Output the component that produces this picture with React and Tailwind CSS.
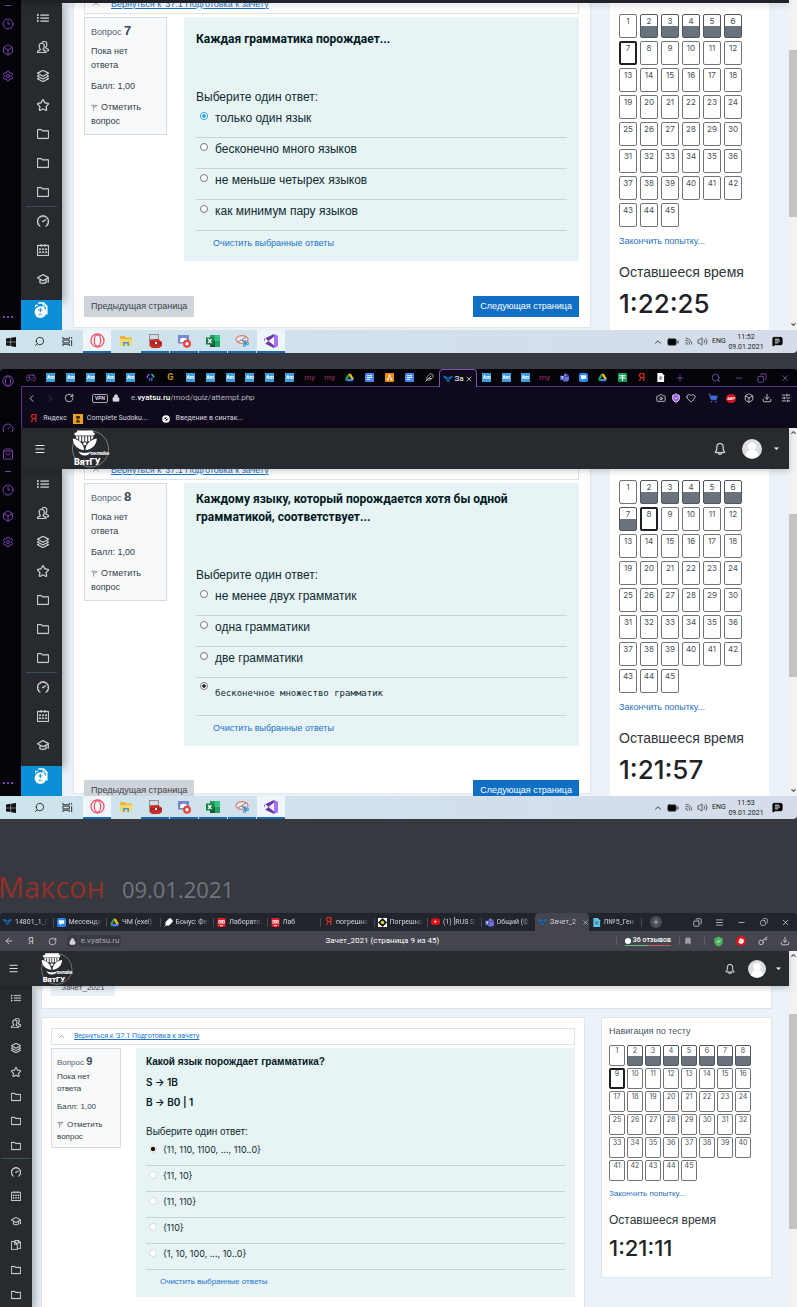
import React from "react";
import {
  Clock3, Box, Settings, Gauge, ShoppingBag, ChevronLeft, ChevronRight, RotateCw, Lock, Camera,
  Heart, ShoppingCart, Download, Search, Minus, Copy, X, Plus, Menu, Feather, Bookmark,
  ArrowLeft, ChevronUp, Wifi, Volume2, Key, Gamepad2, ShieldCheck, Hand, BatteryFull, MessageSquareText,
  SlidersHorizontal,
} from "lucide-react";
import {
  SlList, SlPeople, SlLayers, SlStar, SlFolder, SlSpeedometer, SlCalender, SlGraduation, SlDocs, SlBell,
} from "react-icons/sl";

/* ---------- small drawings ---------- */

function OperaIcon({ className }) {
  return (
    <svg viewBox="0 0 16 16" className={className} fill="none" stroke="currentColor" strokeWidth="1.3">
      <circle cx="8" cy="8" r="7" />
      <ellipse cx="8" cy="8" rx="3.4" ry="6" />
    </svg>
  );
}

function DriveIcon() {
  return (
    <svg viewBox="0 0 12 12" className="size-[9px]">
      <path d="M4.2 1h3.6L12 8H8.2z" fill="#fbbc04" />
      <path d="M4.2 1 0 8l1.9 3L6 4z" fill="#1ea362" />
      <path d="M1.9 11 3.8 8H12l-1.9 3z" fill="#4285f4" />
    </svg>
  );
}

function LinesIcon({ color }) {
  return (
    <svg viewBox="0 0 10 10" className="size-[9px]">
      <rect width="10" height="10" rx="1" fill={color} />
      <path d="M2 3h6M2 5h6M2 7h4" stroke="#fff" />
    </svg>
  );
}

function SheetIcon() {
  return (
    <svg viewBox="0 0 10 10" className="size-[9px]">
      <rect width="10" height="10" rx="1" fill="#0f9d58" />
      <path d="M1.500 3h7M1.500 5.500h7M5 2v6.500" stroke="#fff" strokeWidth="1.2" />
    </svg>
  );
}

function OrgIcon() {
  return (
    <svg viewBox="0 0 10 10" className="size-[9px]">
      <rect width="10" height="10" rx="1" fill="#f08705" />
      <path d="M5 3 3 7M5 3l2 4" stroke="#fff" />
      <path d="M4 1.6h2v2H4zM2 6h2v2H2zM6 6h2v2H6z" fill="#fff" />
    </svg>
  );
}

function ChatIcon() {
  return (
    <svg viewBox="0 0 10 10" className="size-[9px]">
      <rect width="10" height="10" rx="2" fill="#2787f5" />
      <path d="M2 2.5h6v4H5L3.4 8V6.5H2z" fill="#fff" />
    </svg>
  );
}

function TeamsIcon() {
  return (
    <svg viewBox="0 0 10 10" className="size-[9px]">
      <circle cx="6" cy="2.2" r="1.6" fill="#7b83eb" />
      <circle cx="8.6" cy="2.8" r="1.1" fill="#5059c9" />
      <path d="M3 4h7v3.2a2.4 2.4 0 0 1-2.4 2.3H5A2 2 0 0 1 3 7.5z" fill="#6a72dd" />
      <rect y="3" width="5.2" height="5" fill="#4b53bc" />
      <path d="M1.2 4.3H4M2.6 4.3V7" stroke="#fff" strokeWidth=".9" />
    </svg>
  );
}

function UniIcon() {
  return (
    <svg viewBox="0 0 12 10" className="h-2 w-[10px]">
      <path d="M0 1c2 0 4 .6 5 2h2c1-1.400 3-2 5-2-.5 2.500-2 4-4 4.200L7.500 8.500h-3L4 5.200C2 5 .5 3.500 0 1z" fill="#1669b5" />
      <circle cx="6" cy="5" r="1" fill="#0b1c33" />
    </svg>
  );
}

function PdfIcon() {
  return (
    <svg viewBox="0 0 10 10" className="size-[9px]">
      <rect x=".5" width="9" height="10" rx="1.500" fill="#e0202c" />
      <path d="M1.500 2.500h7v3.500h-7z" fill="#fff" />
      <path d="M2.500 3.500v2M4.500 3.500v2M7 3.500v2" stroke="#e0202c" strokeWidth=".9" />
      <path d="M3.500 8.500h3" stroke="#fff" />
    </svg>
  );
}

function DocPage({ color }) {
  return (
    <svg viewBox="0 0 10 10" className="size-[9px]">
      <path d="M1.500 0h5l2.500 2.500V10h-7.500z" fill={color} />
      <path d="M3.500 4.500h3.500M3.500 6.500h3.500" stroke="#555" />
    </svg>
  );
}

function Knot() {
  return (
    <svg viewBox="0 0 10 10" className="size-2">
      <circle cx="5" cy="5" r="4.800" fill="#fff" />
      <path d="M2.500 5.500 5.500 2.500M4.500 7.500l3-3M3.500 3.500l3 3" stroke="#111" strokeWidth="1.200" />
    </svg>
  );
}

function FlagIcon() {
  return (
    <svg viewBox="0 0 8 8" className="mr-[3px] inline size-[7px]" fill="none" stroke="#77828c" strokeWidth=".9">
      <path d="M.5 1.500h6.500L5.200 3.400H2.600M1.400 1.500 3 4v3.500" />
    </svg>
  );
}

function Ya() {
  return <span className="text-[11px] leading-3 text-[#e8341c]">Я</span>;
}

function Am() {
  return (
    <span className="flex size-[9px] items-center justify-center bg-[#3b9ede] text-[5px] font-bold leading-none text-white">Am</span>
  );
}

function My() {
  return <span className="text-[8px] leading-none text-[#a32c68]">my</span>;
}

function Swirl() {
  return (
    <svg viewBox="0 0 10 10" className="size-[9px]" fill="none" strokeWidth="1.600">
      <path d="M1.500 6a3.500 3.500 0 0 1 3-4.500" stroke="#7a4ee0" />
      <path d="M6 1.500A3.500 3.500 0 0 1 8.500 5" stroke="#35c0a0" />
      <path d="M4 5.500v3M6.500 5v4" stroke="#3b6df0" />
    </svg>
  );
}

function GIcon() {
  return <span className="text-[9px] font-bold leading-none text-[#c79a1c]">G</span>;
}

function Logo({ className }) {
  return (
    <svg viewBox="0 0 40 40" className={className}>
      <circle cx="18.500" cy="20" r="18" fill="none" stroke="#8d9196" strokeWidth=".8" />
      <path d="M2 4.500 5 3V1.500h16V3l2 1.500-1 2H3z" fill="#fff" />
      <path d="M4 7.200h2.200v3.600L4 9zM7.200 7.200h2v5h-2zM10.200 7.200h2v5.500h-2zM13.200 7.200h2v5.500h-2zM16.200 7.200h2v5h-2zM19.200 7.200h2V9l-2 1.800z" fill="#fff" />
      <path d="M.8 9.500c5.500.8 10.700 4.500 11.400 11.500C5.500 20.500 1 16 .8 9.500zM24.800 9.500c-5.500.8-10.700 4.500-11.400 11.500 6.700-.5 11.200-5 11.400-11.500z" fill="#fff" />
      <circle cx="12.800" cy="14.800" r="2" fill="#fff" stroke="#272b30" strokeWidth=".8" />
      <path d="M6.500 22.300c3 2.200 9.600 2.200 12.600 0-1 2.800-3.300 4.200-6.300 4.200s-5.300-1.400-6.300-4.200z" fill="#fff" />
      <text x="18.500" y="26" fontSize="5.500" fontWeight="700" fill="#fff" fontFamily="Roboto, sans-serif">онлайн</text>
      <text x="2" y="35.500" fontSize="9" fontWeight="900" fill="#fff" fontFamily="Roboto, sans-serif">ВятГУ</text>
    </svg>
  );
}

function Avatar({ className }) {
  return (
    <svg viewBox="0 0 20 20" className={className}>
      <circle cx="10" cy="10" r="10" fill="#dcdee0" />
      <circle cx="10" cy="7.500" r="4.200" fill="#fff" />
      <path d="M3.500 17a6.500 6.500 0 0 1 13 0A10 10 0 0 1 3.500 17z" fill="#fff" />
    </svg>
  );
}

/* ---------- desktop pieces ---------- */

function RailIcon({ icon: Icon }) {
  return <Icon className="size-3" strokeWidth={2} />;
}

function Rail({ full }) {
  return (
    <aside className="flex w-[21px] shrink-0 flex-col items-center bg-[#05030a] pr-[5px] text-[#7446ac]">
      {full && (
        <div className="flex flex-col items-center pt-1.5">
          <OperaIcon className="size-3" />
          <div className="flex flex-col gap-3.5 pt-[35px]">
            <RailIcon icon={Gauge} />
            <RailIcon icon={ShoppingBag} />
          </div>
        </div>
      )}
      <div className={full ? "mt-[11px] h-px w-1.5 bg-current" : "mt-[5px] h-px w-1.5 bg-current"} />
      <div className="flex flex-col gap-3.5 pt-3">
        <RailIcon icon={Clock3} />
        <RailIcon icon={Box} />
        <RailIcon icon={Settings} />
      </div>
      <div className="mb-3 mt-auto flex gap-0.5">
        <i className="size-0.5 bg-current" />
        <i className="size-0.5 bg-current" />
        <i className="size-0.5 bg-current" />
      </div>
    </aside>
  );
}

function TaskApp({ children, active, running = true }) {
  return (
    <div className={`flex h-full w-7 items-center justify-center border-b-2 ${active ? "bg-[#eef6fa]" : ""} ${running ? "border-[#1a69b5]" : "border-transparent"}`}>
      {children}
    </div>
  );
}

function Taskbar({ time }) {
  return (
    <footer className="flex h-[23px] shrink-0 items-center rounded-br bg-linear-to-r from-[#cde4ed] to-[#d5dcea] text-[#1b1b1b]">
      <div className="flex h-full items-center">
        <div className="flex w-[83px] items-center justify-between pl-1.5 pr-2.5">
          <svg viewBox="0 0 10 10" className="size-[10px]"><path d="M0 1.400 4.600.8v3.900H0zM5.100.7 10 0v4.700H5.100zM0 5.200h4.600v3.900L0 8.500zM5.100 5.200H10V10l-4.900-.7z" fill="#111" /></svg>
          <Search className="size-[11px] -scale-x-100" strokeWidth={1.8} />
          <svg viewBox="0 0 12 12" className="size-[11px]" fill="none" stroke="#222"><path d="M1 1v2h7V1M1 11V9h7v2M1 4.500h7v3H1zM10.500 1v2M10.500 4.500V11" /></svg>
        </div>
        <div className="flex h-full gap-[1px]">
          <TaskApp active><OperaIcon className="size-[15px] text-[#ef4860]" /></TaskApp>
          <TaskApp running={false}>
            <svg viewBox="0 0 14 12" className="w-3.5"><path d="M1 1h5l1 1.500h6V11H1z" fill="#eab73c" /><path d="M1 4h12v7H1z" fill="#fbd768" /><path d="M4 11V7h6v4H8.500V8.500h-3V11z" fill="#3f9be0" /></svg>
          </TaskApp>
          <TaskApp>
            <svg viewBox="0 0 14 14" className="w-3.5"><path d="M1 0h10v7H1z" fill="#8b9098" /><path d="M2 1h8v4H2z" fill="#d7dadd" /><path d="M1.500 6 10 5l4 3v4l-3 2H4l-2.500-2z" fill="#c42b2b" /><path d="M2 9h11.500" stroke="#8d1c1c" /><path d="M7 8h2v2H7z" fill="#eee" /></svg>
          </TaskApp>
          <TaskApp>
            <svg viewBox="0 0 14 14" className="w-3.5"><path d="M1 1h11v10l-2-1.500H1z" fill="#7587cf" /><path d="M3.500 4.500c2-1 4-1 6 0l.5 3.500H3z" fill="#fff" /><circle cx="10" cy="9.800" r="4" fill="#e8433f" /><circle cx="10" cy="9.800" r="1.700" fill="#fff" /></svg>
          </TaskApp>
          <TaskApp>
            <svg viewBox="0 0 14 12" className="w-3.5"><path d="M4 0h10v12H4z" fill="#21a366" /><path d="M9 0h5v6H9z" fill="#33c481" /><path d="M4 6h5v6H4z" fill="#185c37" /><path d="M0 2.500h7.500v7H0z" fill="#107c41" /><path d="m2 4 3.500 4M5.500 4 2 8" stroke="#fff" strokeWidth="1.200" /></svg>
          </TaskApp>
          <TaskApp>
            <svg viewBox="0 0 14 12" className="w-3.5" fill="none"><ellipse cx="7" cy="4.500" rx="6" ry="3.800" stroke="#d8837f" strokeWidth="1.300" fill="#f4e6e6" /><path d="m3 7 8-5" stroke="#888" /><path d="m7 5 5 4M10 5v5" stroke="#2b8ac9" strokeWidth="1.200" /><circle cx="9.500" cy="10.500" r="1.200" stroke="#2b8ac9" /><circle cx="12.500" cy="8.500" r="1.200" stroke="#2b8ac9" /></svg>
          </TaskApp>
          <TaskApp active>
            <svg viewBox="0 0 14 14" className="w-3.5">
              <path d="M10 0 14 1.700v10.600L10 14z" fill="#a673ea" />
              <path d="M1.200 4.200 0 4.900v4.200l1.200.7L10 2.500V0zM1.200 9.800 0 9.100V8l1.200-3.800L10 11.500V14z" fill="#6b35a8" />
            </svg>
          </TaskApp>
        </div>
      </div>
      <div className="ml-auto flex items-center pr-3.5">
        <ChevronUp className="mr-1 size-[10px]" strokeWidth={2} />
        <BatteryFull className="mr-1 size-3 fill-black" strokeWidth={2} />
        <Wifi className="mr-1 size-[10px] rotate-45 text-[#555]" strokeWidth={2} />
        <Volume2 className="mr-1 size-[11px]" strokeWidth={1.5} />
        <span className="w-4 font-['Roboto',sans-serif] text-[7px]">ENG</span>
        <div className="w-9 text-center font-['Roboto',sans-serif] text-[7px] leading-[10px]">
          <div>{time}</div>
          <div>09.01.2021</div>
        </div>
        <MessageSquareText className="ml-2 size-[11px] fill-black text-black [&>path:not(:first-child)]:text-white" strokeWidth={2} />
      </div>
    </footer>
  );
}

function Scrollbar({ top, thumb, arrowTop = true, arrowBottom = true }) {
  return (
    <div className="flex w-2 shrink-0 flex-col items-center bg-[#f1f2f3]">
      <div className="flex h-2 items-center">
        {arrowTop && <ChevronUp className="size-[7px] text-[#555]" strokeWidth={4} />}
      </div>
      <div className={top} />
      <div className={`w-full bg-[#c1c3c5] ${thumb}`} />
      {arrowBottom && <ChevronUp className="mb-0.5 mt-auto size-[7px] rotate-180 text-[#555]" strokeWidth={4} />}
    </div>
  );
}

/* ---------- course site pieces ---------- */

const menu = [SlList, SlPeople, SlLayers, SlStar, SlFolder, SlFolder, SlFolder, SlSpeedometer, SlCalender, SlGraduation];

function SiteMenu() {
  return (
    <nav className="relative z-10 flex w-[41px] shrink-0 flex-col">
      <div className="flex flex-col bg-[#272b30] pb-[7px] text-[#e4e6e8] shadow-[3px_2px_8px_rgba(0,0,0,.3)]">
        {menu.map((Icon, i) => (
          <a href="#" key={i} aria-label="Раздел" className={`mx-[5px] flex h-[29px] items-center justify-center pl-0.5 ${i === 7 ? "border-t border-[#3d4d57]" : ""}`}>
            <Icon className="size-3 stroke-current [stroke-width:30]" />
          </a>
        ))}
      </div>
      <a href="#" aria-label="Документы" className="flex flex-1 items-start justify-center bg-[#0a8fd6] pb-[11px] pt-0.5 text-white">
        <svg viewBox="0 0 14 16" className="h-[17px]">
          <path d="M4 1h5l3 3v7H8" fill="none" stroke="#fff" strokeWidth="1.500" />
          <path d="M8.500 1v3.500H12M1.500 5V3H4" fill="none" stroke="#fff" />
          <circle cx="6" cy="9.500" r="5.500" fill="#fff" />
          <path d="M6 5.500v4M4 7.500h4M4.500 12.500 6 11l1.500 1.500" stroke="#0a8fd6" fill="none" strokeWidth=".9" />
        </svg>
      </a>
    </nav>
  );
}

const compactMenu = [...menu, SlDocs, SlFolder, SlFolder];

function CompactMenu() {
  return (
    <nav className="relative z-10 flex w-8 shrink-0 flex-col bg-[#272b30] text-[#e4e6e8] shadow-[3px_2px_8px_rgba(0,0,0,.3)]">
      {compactMenu.map((Icon, i) => (
        <a href="#" key={i} aria-label="Раздел" className={`mx-px flex flex-1 items-center justify-center ${i === 7 ? "border-t border-[#3d5557]" : ""}`}>
          <Icon className="size-[10px] stroke-current [stroke-width:30]" />
        </a>
      ))}
    </nav>
  );
}

function SiteHeader({ compact }) {
  return (
    <header className={`relative z-20 flex shrink-0 items-center bg-[#272b30] text-[#e8e9ea] shadow-[0_2px_6px_rgba(0,0,0,.2)] ${compact ? "h-[35px] pl-2 pr-2" : "h-[41px] pl-[13px] pr-2.5"}`}>
      <button aria-label="Меню">
        <Menu className={compact ? "size-[11px]" : "size-3"} strokeWidth={2} />
      </button>
      <Logo className={compact ? "ml-[22px] size-[34px]" : "ml-[26px] size-10"} />
      <div className="ml-auto flex items-center">
        <button aria-label="Уведомления"><SlBell className={compact ? "size-[10px] stroke-current [stroke-width:30]" : "size-3 stroke-current [stroke-width:30]"} /></button>
        <Avatar className={compact ? "ml-[13px] size-[18px]" : "ml-4 size-5"} />
        <svg viewBox="0 0 6 4" className={compact ? "ml-2.5 w-[5px]" : "ml-3 w-[5px]"}><path d="M0 .5h6L3 3.500z" fill="#fff" /></svg>
      </div>
    </header>
  );
}

function BackLink({ compact }) {
  return (
    <div className={`flex items-center border border-[#dee2e6] bg-white ${compact ? "h-[17px] gap-2 pl-[5px]" : "-mt-[9px] h-5 gap-2.5 pl-1.5"}`}>
      <ChevronUp className={compact ? "size-[9px] text-[#5c6f80]" : "size-[10px] text-[#5c6f80]"} strokeWidth={1.6} />
      <a href="#" className={`text-[#1b74c9] underline ${compact ? "font-['Roboto',sans-serif] text-[7px]" : "text-[9px]"}`}>
        Вернуться к '37.1 Подготовка к зачету
      </a>
    </div>
  );
}

function QuestionInfo({ number, compact }) {
  return (
    <div className={`shrink-0 self-start border border-[#d5dbe1] bg-[#f8f9fb] text-[#343f4a] ${compact ? "w-[70px] pb-1 pl-[5px] pt-1 text-[8px] leading-3" : "w-[83px] pb-[6px] pl-1.5 pt-1 text-[9px] leading-[14px]"}`}>
      <div className="text-[#56636f]">
        Вопрос <b className={compact ? "text-[11px] leading-4 text-[#3c4a57]" : "text-[13px] leading-[18px] text-[#3c4a57]"}>{number}</b>
      </div>
      <div className={compact ? "mt-0.5" : "mt-1"}>Пока нет<br />ответа</div>
      <div className={compact ? "mt-1.5" : "mt-[7px]"}>Балл: 1,00</div>
      <button className={`block text-left ${compact ? "mt-1.5" : "mt-[7px]"}`}>
        <FlagIcon />
        Отметить<br />вопрос
      </button>
    </div>
  );
}

function Options({ name, options, checked, compact, tone, mono }) {
  return (
    <fieldset className="min-w-0">
      <legend className={compact ? "text-[10px] leading-4" : "text-[12px] leading-[19px]"}>Выберите один ответ:</legend>
      {options.map((text, i) => (
        <label
          key={text}
          className={`flex items-start border-b border-[#c7d3d6] ${compact ? "gap-1 pb-[7px] pl-[3px] pt-px" : "gap-[7px] pl-1"} ${compact ? "min-h-[26px]" : i === mono ? "pb-3 pt-1.5" : "pb-[9px] pt-px"}`}
        >
          <input
            type="radio"
            name={name}
            defaultChecked={i === checked}
            className={`shrink-0 appearance-none rounded-full border bg-white ${compact ? "mt-1 size-2 border-[#d5dde0]" : `size-2 ${i === mono ? "-mt-0.5" : "mt-1"} border-[#777]`} ${tone}`}
          />
          <span className={compact ? "ml-0.5 font-['Inter',sans-serif] text-[9px] leading-[17px]" : i === mono ? "font-['DejaVu_Sans_Mono',monospace] text-[9px] leading-[19px]" : "text-[12px] leading-5"}>
            {text}
          </span>
        </label>
      ))}
      <a href="#" className={`block text-[#1b74c9] ${compact ? "ml-3.5 mt-1.5 text-[8px] leading-3" : "ml-[17px] mt-[5px] text-[9px] leading-[14px]"}`}>
        Очистить выбранные ответы
      </a>
    </fieldset>
  );
}

function QuizNav({ current, answered, compact }) {
  return (
    <div className={compact ? "grid grid-cols-[repeat(8,16px)] gap-0.5" : "grid grid-cols-[repeat(6,18px)] gap-[3px]"}>
      {Array.from({ length: 45 }, (_, k) => k + 1).map((n) => (
        <a
          href="#"
          key={n}
          className={`rounded-[2px] text-center font-['Inter',sans-serif] ${compact ? "h-[21px] text-[7px] leading-[10px]" : "h-6 text-[8px] leading-3"} ${
            n === current
              ? "border-2 border-[#1d2125] text-[#495057]"
              : answered.includes(n)
                ? "border border-[#4f565d] bg-linear-to-b from-white from-50% to-[#6a737b] to-50% text-[#495057]"
                : "border border-[#6f757b] text-[#495057]"
          }`}
        >
          <span className={n === current ? "-mt-px block" : "block"}>{n}</span>
        </a>
      ))}
    </div>
  );
}

function Timer({ value, compact }) {
  return (
    <div>
      <a href="#" className={`block text-[#2472bd] ${compact ? "mt-[7px] text-[8px] leading-3" : "mt-[7px] text-[9px] leading-[14px]"}`}>
        Закончить попытку...
      </a>
      <h3 className={`text-[#30363c] ${compact ? "mt-3 text-[12px] leading-4" : "mt-3.5 text-[14px] leading-5"}`}>Оставшееся время</h3>
      <div className={`font-['Inter',sans-serif] font-medium text-[#1f2327] ${compact ? "mt-1 text-[22px] leading-8" : "mt-1 text-[26px] leading-9"}`}>{value}</div>
    </div>
  );
}

function QuizPage({ number, title, titlePad, options, checked, mono, tone, current, answered, time, navPad }) {
  return (
    <div className="flex min-w-0 flex-1 bg-[#ebf3f8] pl-[11px] pr-5">
      <main className="mb-0.5 min-w-0 flex-1 border-x border-b border-[#e0e7ec] bg-white pl-2.5 pr-[11px]">
        <BackLink />
        <div className="mt-[3px] flex items-stretch gap-[17px]">
          <QuestionInfo number={number} />
          <section className="min-w-0 flex-1 bg-[#e7f3f5] px-3 pb-[11px] pt-[7px] text-[#0f2b30]">
            <h2 className={`font-['Roboto',sans-serif] text-[12px] font-bold leading-[18px] text-[#001a1e] ${titlePad}`}>{title}</h2>
            <Options name={`q${number}`} options={options} checked={checked} mono={mono} tone={tone} />
          </section>
        </div>
        <div className={`flex justify-between ${navPad}`}>
          <button className="h-[21px] bg-[#ced4da] px-[7px] text-[9px] text-[#3a424a]">Предыдущая страница</button>
          <button className="h-[21px] bg-[#0f6fc5] px-[7px] text-[9px] text-white">Следующая страница</button>
        </div>
      </main>
      <aside className="ml-[19px] w-[159px] shrink-0 bg-white pl-[9px] pt-[11px]">
        <QuizNav current={current} answered={answered} />
        <Timer value={time} />
      </aside>
    </div>
  );
}

/* ---------- browser chrome ---------- */

const gxTabs = [Am, Am, Am, Am, Am, Swirl, GIcon, Am, Am, Am, Am, Am, Am, My, My, DriveIcon, () => <LinesIcon color="#4285f4" />, OrgIcon, () => <LinesIcon color="#4285f4" />, () => <Feather className="size-[9px] text-[#c9d8c9]" />];
const gxTabsRight = [Am, Am, Am, My, TeamsIcon, ChatIcon, DriveIcon, SheetIcon, Ya, () => <DocPage color="#fff" />];

function GxChrome() {
  return (
    <div className="shrink-0 bg-[#0e0a1b] font-['Roboto',sans-serif] text-[#d8d6e0]">
      <div className="flex h-[18px] bg-[#05030a] text-[#7d50b5]">
        <div className="flex min-w-0 flex-1 items-center border-b border-[#5b3488]">
          <span className="flex flex-1 justify-center"><Gamepad2 className="size-[10px]" /></span>
          {gxTabs.map((T, i) => <span key={i} className="flex flex-1 justify-center"><T /></span>)}
        </div>
        <div className="flex w-[38px] items-center justify-between rounded-t-sm border border-b-0 border-[#7d50b5] bg-[#0e0a1b] px-[3px] text-[8px] text-white">
          <UniIcon />За<X className="size-2" />
        </div>
        <div className="flex w-[320px] items-center border-b border-[#5b3488]">
          <div className="flex w-[213px]">
            {gxTabsRight.map((T, i) => <span key={i} className="flex flex-1 items-center justify-center"><T /></span>)}
            <span className="flex flex-1 items-center justify-center"><Plus className="size-[10px]" /></span>
          </div>
          <div className="ml-auto flex w-[93px] justify-around">
            <Search className="size-[10px]" /><Minus className="size-[10px]" /><Copy className="size-[10px] -scale-x-100" /><X className="size-[10px]" />
          </div>
        </div>
      </div>
      <div className="flex h-[22px] items-center border-l border-[#5b3488] pl-1 pr-1.5">
        <ChevronLeft className="size-[11px]" />
        <ChevronRight className="ml-2 size-[11px] text-[#4b4660]" />
        <RotateCw className="ml-2 size-[10px]" />
        <span className="ml-[18px] rounded-xs border border-[#a8a6b0] px-0.5 text-[5px] font-bold leading-[7px]">VPN</span>
        <Lock className="ml-1 size-2 fill-current" />
        <span className="ml-[11px] text-[8px] text-[#b9b6c4]">e.<b className="font-medium text-white">vyatsu.ru</b>/mod/quiz/attempt.php</span>
        <div className="ml-auto flex items-center">
          <Camera className="size-[10px]" />
          <ShieldCheck className="ml-[5px] size-[10px] fill-[#9a5cf0] text-white" />
          <Heart className="ml-[5px] size-[10px]" />
          <ShoppingCart className="ml-3 size-[10px] fill-[#3b6cd0] text-[#3b6cd0]" />
          <span className="ml-2 rounded-full bg-[#d0121b] px-px text-[4px] font-bold leading-[9px] text-white">ABP</span>
          <Box className="ml-2 size-[10px]" />
          <Download className="ml-2 size-[10px]" />
          <SlidersHorizontal className="ml-[9px] size-[10px]" />
        </div>
      </div>
      <div className="flex h-[19px] items-center border-l border-[#5b3488] pl-2 text-[7px]">
        <Ya /><span className="ml-1.5">Яндекс</span>
        <svg viewBox="0 0 10 10" className="ml-1.5 size-[10px]"><rect width="10" height="10" fill="#f0a21c" /><path d="M3 2h4v2L5 5.500 7 7v1.500H3V7l1.500-1.500L3 4z" fill="#4a3310" /></svg>
        <span className="ml-1">Complete Sudoku...</span>
        <span className="ml-3.5 mr-1.5"><Knot /></span>
        <span>Введение в синтак...</span>
      </div>
    </div>
  );
}

const yaTabs = [
  [UniIcon, "14801_1_0"],
  [ChatIcon, "Мессендж"],
  [DriveIcon, "ЧМ (exel) -"],
  [() => <Feather className="size-[9px] fill-white text-white" />, "Бонус: Фев"],
  [PdfIcon, "Лаборатор"],
  [PdfIcon, "Лаб"],
  [Ya, "погрешно"],
  [() => <svg viewBox="0 0 10 10" className="size-[9px]"><rect width="10" height="10" fill="#fff" /><path d="m5 0 5 5-5 5-5-5z" fill="#111" /><circle cx="5" cy="5" r="2" fill="#e8d21c" /></svg>, "Погрешно"],
  [() => <svg viewBox="0 0 10 8" className="w-[9px]"><rect width="10" height="7" y=".5" rx="2" fill="#e81010" /><path d="M4 2.500v3L6.500 4z" fill="#fff" /></svg>, "(1) [RUS SU"],
  [TeamsIcon, "Общий (Ф"],
  [UniIcon, "Зачет_2"],
  [() => <DocPage color="#58c6e8" />, "Л№5_Ген"],
];

function YandexChrome() {
  return (
    <div className="shrink-0 font-['Roboto',sans-serif] text-[#d5d6da]">
      <div className="flex h-[18px] rounded-t bg-[#22242c]">
        <div className="flex min-w-0 flex-1">
          {yaTabs.map(([Icon, text], i) => (
            <div key={text + i} className={`flex min-w-0 flex-1 items-center overflow-hidden pl-[3px] ${i === 10 ? "rounded-t bg-[#45454f]" : ""}`}>
              <span className="flex w-[9px] shrink-0 justify-center"><Icon /></span>
              <span className="ml-[3px] w-[33px] overflow-hidden whitespace-nowrap text-[7px] leading-3 [mask-image:linear-gradient(to_right,black_75%,transparent)]">{text}</span>
              {i === 10 ? <X className="size-[7px] shrink-0" /> : i === 9 ? null : <i className="ml-auto h-[9px] w-px bg-[#4a4c55]" />}
            </div>
          ))}
        </div>
        <div className="flex w-[155px] items-center">
          <span className="ml-2 flex size-3 items-center justify-center rounded-full bg-[#4a4b54]"><Plus className="size-2" /></span>
          <div className="ml-auto flex w-[111px] items-center justify-around">
            <Copy className="size-[9px] -scale-x-100" /><Menu className="size-[9px]" /><Minus className="size-[9px]" /><Copy className="size-[8px] -scale-x-100" /><X className="size-[9px]" />
          </div>
        </div>
      </div>
      <div className="flex h-5 items-center bg-[#45454f] pl-1 pr-[7px]">
        <div className="flex flex-[11] items-center">
          <ArrowLeft className="size-[10px]" />
          <span className="ml-3.5 text-[9px]">Я</span>
          <RotateCw className="ml-3.5 size-[9px]" />
          <span className="ml-2.5 flex h-3 w-[11px] items-center justify-center rounded-sm bg-[#393944]"><Lock className="size-[7px] fill-current" /></span>
          <span className="ml-px rounded-sm bg-[#393944] px-0.5 text-[8px] leading-3 text-[#a9aab2]">e.vyatsu.ru</span>
        </div>
        <span className="text-[8px] text-white">Зачет_2021 (страница 9 из 45)</span>
        <div className="flex flex-[12] items-center justify-end">
          <i className="h-2 w-px bg-[#63636e]" />
          <span className="ml-2 flex items-center border-b border-solid text-[7px] font-medium leading-[9px] text-white [border-image:linear-gradient(to_right,#6abf7b_50%,#d0585c_50%)_1]">
            <i className="mr-0.5 size-1.5 rounded-full bg-white" />36 отзывов
          </span>
          <i className="ml-2 h-2 w-px bg-[#63636e]" />
          <Bookmark className="ml-1 size-2 fill-current text-[#a0a0a8]" />
          <i className="ml-3 h-2 w-px bg-[#63636e]" />
          <ShieldCheck className="ml-2 size-[11px] fill-[#4fb35f] text-[#4fb35f] [&>path:last-child]:text-white" />
          <span className="ml-3 flex size-[10px] items-center justify-center rounded-full bg-[#e0151b]"><Hand className="size-[6px] fill-white text-white" /></span>
          <Key className="ml-3 size-[10px]" />
          <Download className="ml-3 size-[10px]" />
        </div>
      </div>
    </div>
  );
}

/* ---------- page ---------- */

const blueDot = "checked:border-[#2b9be0] checked:bg-[radial-gradient(circle,#2b9be0_35%,#fff_45%)]";
const blackDot = "checked:bg-[radial-gradient(circle,#222_35%,#fff_45%)]";

export default function App() {
  return (
    <div className="flex min-h-screen flex-col overflow-hidden bg-[#36393f] font-['Liberation_Sans',Arial,sans-serif] leading-none">
      <section className="flex flex-col overflow-hidden">
        <div className="flex">
          <Rail />
          <div className="flex min-w-0 flex-1 flex-col">
            <div className="relative z-20 h-[3px] bg-[#1f2328] shadow-[0_2px_6px_rgba(0,0,0,.2)]" />
            <div className="flex flex-1 overflow-hidden">
              <SiteMenu />
              <QuizPage
                number={7}
                title="Каждая грамматика порождает..."
                titlePad="mt-1.5 pb-10"
                options={["только один язык", "бесконечно много языков", "не меньше четырех языков", "как минимум пару языков"]}
                checked={0}
                tone={blueDot}
                current={7}
                answered={[2, 3, 4, 5, 6]}
                time="1:22:25"
                navPad="mb-[8px] mt-[35px]"
              />
            </div>
          </div>
          <Scrollbar arrowTop={false} top="h-[42px]" thumb="h-[167px]" />
        </div>
        <Taskbar time="11:52" />
      </section>

      <section className="mt-4 flex flex-col overflow-hidden rounded-t">
        <div className="flex">
          <Rail full />
          <div className="flex min-w-0 flex-1 flex-col">
            <GxChrome />
            <div className="flex flex-1">
              <div className="flex min-w-0 flex-1 flex-col">
                <SiteHeader />
                <div className="flex flex-1 overflow-hidden">
                  <SiteMenu />
                  <QuizPage
                    number={8}
                    title="Каждому языку, который порождается хотя бы одной грамматикой, соответствует..."
                    titlePad="pb-10"
                    options={["не менее двух грамматик", "одна грамматики", "две грамматики", "бесконечное множество грамматик"]}
                    checked={3}
                    mono={3}
                    tone={blackDot}
                    current={8}
                    answered={[2, 3, 4, 5, 6, 7]}
                    time="1:21:57"
                    navPad="-mb-2 mt-[34px]"
                  />
                </div>
              </div>
              <Scrollbar top="h-[78px]" thumb="h-[163px]" />
            </div>
          </div>
        </div>
        <Taskbar time="11:53" />
      </section>

      <div className="flex items-baseline gap-[17px] pb-1.5 pt-[50px] font-['Open_Sans',sans-serif] leading-9">
        <b className="-ml-0.5 text-[29px] font-normal text-[#93302a]">Максон</b>
        <time className="text-[22px] text-[#72767d]">09.01.2021</time>
      </div>

      <section className="flex flex-1 flex-col">
        <YandexChrome />
        <div className="flex flex-1">
          <div className="flex min-w-0 flex-1 flex-col">
            <SiteHeader compact />
            <div className="flex flex-1 overflow-hidden">
              <CompactMenu />
              <div className="flex min-w-0 flex-1 flex-col bg-[#ebf3f8] pl-[9px] pr-[17px]">
                <div className="border-x border-b border-[#dfe6eb] bg-white pb-3 pl-[9px]">
                  <span className="-mt-[6px] block w-16 bg-[#e9f1f6] text-center text-[8px] leading-4 text-[#495057]">Зачет_2021</span>
                </div>
                <div className="mt-2 flex flex-1 items-start gap-4">
                  <main className="min-w-0 flex-1 self-stretch border border-b-0 border-[#dfe6eb] bg-white px-[9px] pb-[10px] pt-[10px]">
                    <BackLink compact />
                    <div className="mt-[3px] flex gap-[15px]">
                      <QuestionInfo number={9} compact />
                      <section className="min-w-0 flex-1 bg-[#e7f3f5] px-2.5 pb-[9px] pt-1.5 text-[#0f2b30]">
                        <div className="flex flex-col gap-1 pb-3.5 font-bold text-[#001a1e]">
                          <h2 className="text-[10px] leading-4">Какой язык порождает грамматика?</h2>
                          <p className="font-['Inter',sans-serif] text-[10px] font-semibold leading-4">S → 1B</p>
                          <p className="font-['Inter',sans-serif] text-[10px] font-semibold leading-4">B → B0 | 1</p>
                        </div>
                        <Options
                          compact
                          name="q9"
                          options={["{11, 110, 1100, ..., 110..0}", "{11, 10}", "{11, 110}", "{110}", "{1, 10, 100, ..., 10..0}"]}
                          checked={0}
                          tone="checked:bg-[radial-gradient(circle,#111_45%,#fbeed0_55%)]"
                        />
                      </section>
                    </div>
                  </main>
                  <aside className="w-[171px] shrink-0 border border-[#dfe6eb] bg-white pb-[13px] pl-[7px] pt-1.5">
                    <h3 className="mb-1.5 text-[9px] leading-[15px] text-[#495965]">Навигация по тесту</h3>
                    <QuizNav compact current={9} answered={[2, 3, 4, 5, 6, 7, 8]} />
                    <Timer compact value="1:21:11" />
                  </aside>
                </div>
              </div>
            </div>
          </div>
          <Scrollbar top="h-[55px]" thumb="h-[215px]" arrowBottom={false} />
        </div>
      </section>
    </div>
  );
}
